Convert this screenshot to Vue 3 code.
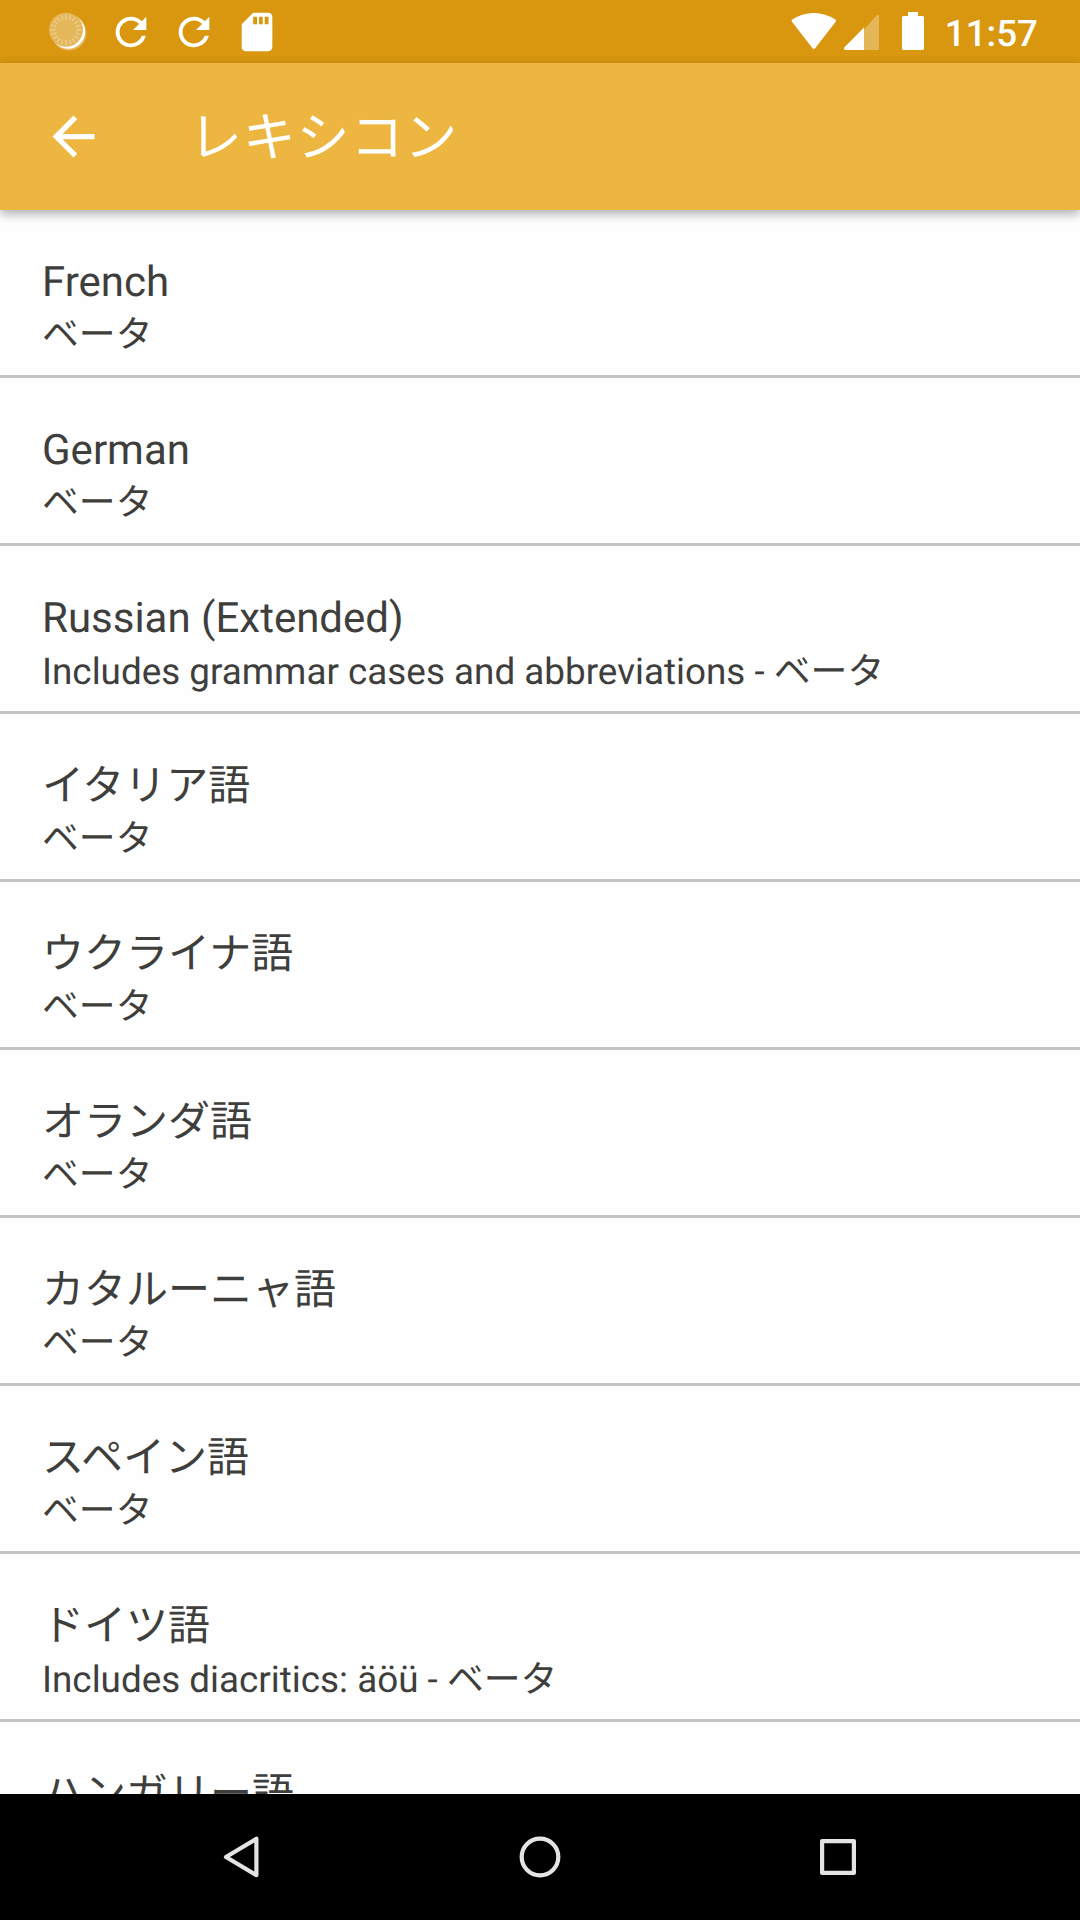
<script setup>
const lexicons = [
  { name: 'French', note: 'ベータ' },
  { name: 'German', note: 'ベータ' },
  { name: 'Russian (Extended)', note: 'Includes grammar cases and abbreviations - ベータ' },
  { name: 'イタリア語', note: 'ベータ' },
  { name: 'ウクライナ語', note: 'ベータ' },
  { name: 'オランダ語', note: 'ベータ' },
  { name: 'カタルーニャ語', note: 'ベータ' },
  { name: 'スペイン語', note: 'ベータ' },
  { name: 'ドイツ語', note: 'Includes diacritics: äöü - ベータ' },
  { name: 'ハンガリー語', note: 'ベータ' },
]
const ticks = Array.from({ length: 20 }, (_, i) => i * 18)
</script>

<template>
  <div class="screen">
    <header class="status">
      <div class="notifications">
        <svg class="note-icon" viewBox="0 0 46 46">
          <circle cx="24" cy="24" r="17.6" fill="#fff" fill-opacity=".3" />
          <circle cx="23.2" cy="22.8" r="17" fill="#fff" />
          <circle cx="21" cy="20.8" r="17" fill="#e4b75a" />
          <g stroke="#ecce92" stroke-width="1.3">
            <line v-for="a in ticks" :key="a" x1="21" y1="5.4" x2="21" y2="10.5" :transform="`rotate(${a} 21 20.8)`" />
          </g>
        </svg>
        <svg v-for="n in 2" :key="n" class="note-icon" viewBox="0 0 24 24">
          <path fill="#fff" d="M17.65 6.35A7.96 7.96 0 0 0 12 4a8 8 0 1 0 7.73 10h-2.08A6 6 0 1 1 12 6c1.66 0 3.14.69 4.22 1.78L13 11h7V4z" />
        </svg>
        <svg class="note-icon" viewBox="0 0 24 24">
          <path fill="#fff" d="M18 2h-8L4.02 8 4 20c0 1.1.9 2 2 2h12c1.1 0 2-.9 2-2V4c0-1.1-.9-2-2-2zm-6 6h-2V4h2v4zm3 0h-2V4h2v4zm3 0h-2V4h2v4z" />
        </svg>
      </div>
      <div class="system">
        <svg width="134" height="63" viewBox="791 0 134 63">
          <path fill="#fff" d="M792 21.7Q791 20.5 792.3 19.6Q802 13 813.8 13T835.3 19.6Q836.6 20.5 835.7 21.7L815.3 48Q813.8 49.7 812.3 48Z" />
          <path fill="#fff" fill-opacity=".3" d="M864 29.5L876.5 15.5Q879 13.5 879 16.5V48.5Q879 50 877.5 50H864Z" />
          <path fill="#fff" d="M864 27.5V50H845.5Q843 49.5 844.5 47.3Z" />
          <path fill="#fff" d="M908 12h10v4h4.5q1.5 0 1.5 1.5v31q0 1.5-1.5 1.5h-19q-1.5 0-1.5-1.5v-31q0-1.5 1.5-1.5h4.5z" />
        </svg>
        <span class="clock">11:57</span>
      </div>
    </header>
    <nav class="toolbar">
      <svg class="back" viewBox="0 0 24 24">
        <path fill="#fff" d="M20 11H7.83l5.59-5.59L12 4l-8 8 8 8 1.41-1.41L7.83 13H20v-2z" />
      </svg>
      <h1>レキシコン</h1>
    </nav>
    <main class="list">
      <section v-for="item in lexicons" :key="item.name" class="row">
        <div class="name">{{ item.name }}</div>
        <div class="note" :class="{ short: item.note === 'ベータ' }">{{ item.note }}</div>
      </section>
    </main>
    <footer class="navbar">
      <svg width="1080" height="126" viewBox="0 1794 1080 126" fill="none" stroke="#e4e4e4" stroke-width="4.2" stroke-linejoin="round">
        <path d="M256.4 1838.7V1875.2L226 1857Z" />
        <circle cx="540" cy="1857" r="18.3" />
        <rect x="822.1" y="1841.1" width="31.8" height="31.8" />
      </svg>
    </footer>
  </div>
</template>

<style>
body {
  margin: 0;
}
</style>

<style scoped>
.screen {
  width: 1080px;
  height: 1920px;
  display: flex;
  flex-direction: column;
  overflow: hidden;
  background: #fefefe;
  color: #3e3e3d;
  font-family: Roboto, "Noto Sans CJK JP", sans-serif;
  text-rendering: geometricPrecision;
}
.status {
  flex: none;
  height: 63px;
  box-sizing: border-box;
  padding: 0 42px 0 45px;
  display: flex;
  justify-content: space-between;
  background: #d8970f;
}
.notifications {
  display: flex;
  gap: 17px;
  padding-top: 8.5px;
}
.note-icon {
  display: block;
  width: 46px;
  height: 46px;
}
.system {
  display: flex;
  gap: 20px;
}
.clock {
  color: #fff;
  font-size: 36.75px;
  font-weight: 500;
  line-height: 67px;
}
.toolbar {
  flex: none;
  height: 147px;
  box-sizing: border-box;
  padding-left: 42px;
  display: flex;
  align-items: center;
  background: #edb641;
  box-shadow: 0 4px 10px rgba(0, 0, 0, .32);
  z-index: 1;
}
.back {
  width: 63px;
  height: 63px;
}
h1 {
  margin: 4px 0 0 84px;
  color: #fff;
  font-size: 53px;
  letter-spacing: .8px;
  line-height: 63px;
  font-weight: 400;
}
.list {
  flex: 1;
  min-height: 0;
  overflow: hidden;
}
.row {
  height: 168px;
  box-sizing: border-box;
  padding: 47px 42px 0;
  border-bottom: 3px solid #c4c4c4;
  white-space: nowrap;
}
.name {
  height: 51px;
  font-size: 42px;
  line-height: 51px;
}
.note {
  height: 50px;
  font-size: 36.85px;
  line-height: 55px;
}
.note.short {
  line-height: 53px;
}
.navbar {
  flex: none;
  height: 126px;
  background: #000;
}
.navbar svg {
  display: block;
}
</style>
